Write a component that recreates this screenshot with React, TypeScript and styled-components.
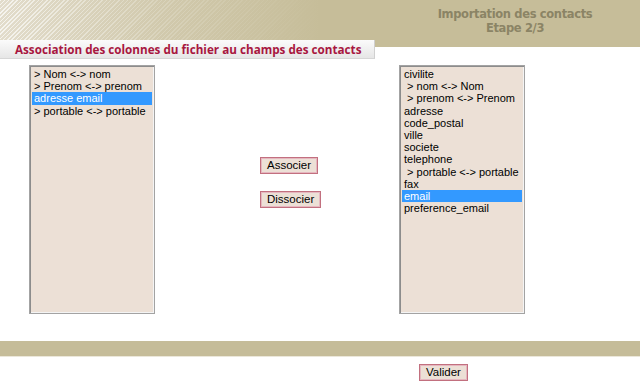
import React, { useState } from 'react';
import styled, { createGlobalStyle } from 'styled-components';

const GlobalStyle = createGlobalStyle`
  html, body {
    margin: 0;
    padding: 0;
    background: #ffffff;
    font-family: "Liberation Sans", Arial, sans-serif;
  }
`;

const Header = styled.div`
  height: 47px;
  display: flex;
  justify-content: flex-end;
  background:
    linear-gradient(to right, rgba(198, 189, 153, 0) 0%, rgba(198, 189, 153, 0.6) 25%, #c6bd99 50%),
    repeating-linear-gradient(135deg, rgba(255, 255, 255, 0.7) 0 1px, rgba(255, 255, 255, 0) 1px 3px),
    #e2dccb;
`;

const StepTitle = styled.div`
  width: 230px;
  margin-right: 10px;
  padding-top: 7px;
  text-align: center;
  font-family: "DejaVu Sans", "Open Sans", sans-serif;
  font-weight: 700;
  font-size: 11.5px;
  letter-spacing: -0.35px;
  line-height: 14px;
  color: #8b8465;
`;

const SectionTab = styled.div`
  position: relative;
  width: 375px;
  height: 19px;
  margin-top: -7px;
  padding-left: 15px;
  box-sizing: border-box;
  background: linear-gradient(to bottom, #fbfbfb, #e6e6e6);
  border-right: 1px solid #d0d0d0;
  border-bottom: 1px solid #d6d6d6;
  font-family: "Open Sans", "DejaVu Sans", sans-serif;
  font-weight: 700;
  font-size: 11.7px;
  line-height: 19px;
  color: #a8173f;
  white-space: nowrap;
`;

const Body = styled.div`
  display: grid;
  grid-template-columns: 126px 1fr 126px;
  padding: 6px 115px 0 29px;
`;

const ListBox = styled.div`
  height: 249px;
  box-sizing: border-box;
  background: #ece0d6;
  border: 1px solid #a3a3a3;
  box-shadow: inset 1px 1px 0 #8c8c8c, inset -1px -1px 0 #f4f4f4;
  padding: 2px 2px;
  overflow: hidden;
`;

const Item = styled.div<{ $selected?: boolean }>`
  font-size: 11px;
  line-height: 12.2px;
  height: 12.2px;
  padding-left: 2px;
  white-space: pre;
  cursor: default;
  color: ${(p) => (p.$selected ? '#ffffff' : '#000000')};
  background: ${(p) => (p.$selected ? '#3399ff' : 'transparent')};
`;

const Actions = styled.div`
  display: flex;
  flex-direction: column;
  align-items: flex-start;
  gap: 17px;
  padding: 92px 0 0 105px;
`;

const Button = styled.button`
  height: 17px;
  padding: 0 6px;
  box-sizing: border-box;
  background: #ece0d6;
  border: 1px solid #c2707f;
  box-shadow: inset 0 0 0 1px #e6b7c0;
  font-family: "Liberation Sans", Arial, sans-serif;
  font-size: 11.5px;
  line-height: 13px;
  color: #000000;
  cursor: pointer;
`;

const FooterBar = styled.div`
  height: 15px;
  margin-top: 27px;
  background: #c5bc99;
  border-bottom: 1px solid #ebe7da;
`;

const FooterActions = styled.div`
  display: flex;
  padding: 7px 0 0 419px;
`;

const leftItems = ['> Nom <-> nom', '> Prenom <-> prenom', 'adresse email', '> portable <-> portable'];
const rightItems = [
  'civilite',
  ' > nom <-> Nom',
  ' > prenom <-> Prenom',
  'adresse',
  'code_postal',
  'ville',
  'societe',
  'telephone',
  ' > portable <-> portable',
  'fax',
  'email',
  'preference_email',
];

const App: React.FC = () => {
  const [left, setLeft] = useState(2);
  const [right, setRight] = useState(10);

  return (
    <>
      <GlobalStyle />
      <Header>
        <StepTitle>
          Importation des contacts
          <br />
          Etape 2/3
        </StepTitle>
      </Header>
      <SectionTab>Association des colonnes du fichier au champs des contacts</SectionTab>
      <Body>
        <ListBox>
          {leftItems.map((label, i) => (
            <Item key={label} $selected={i === left} onClick={() => setLeft(i)}>
              {label}
            </Item>
          ))}
        </ListBox>
        <Actions>
          <Button>Associer</Button>
          <Button>Dissocier</Button>
        </Actions>
        <ListBox>
          {rightItems.map((label, i) => (
            <Item key={label} $selected={i === right} onClick={() => setRight(i)}>
              {label}
            </Item>
          ))}
        </ListBox>
      </Body>
      <FooterBar />
      <FooterActions>
        <Button>Valider</Button>
      </FooterActions>
    </>
  );
};

export default App;
